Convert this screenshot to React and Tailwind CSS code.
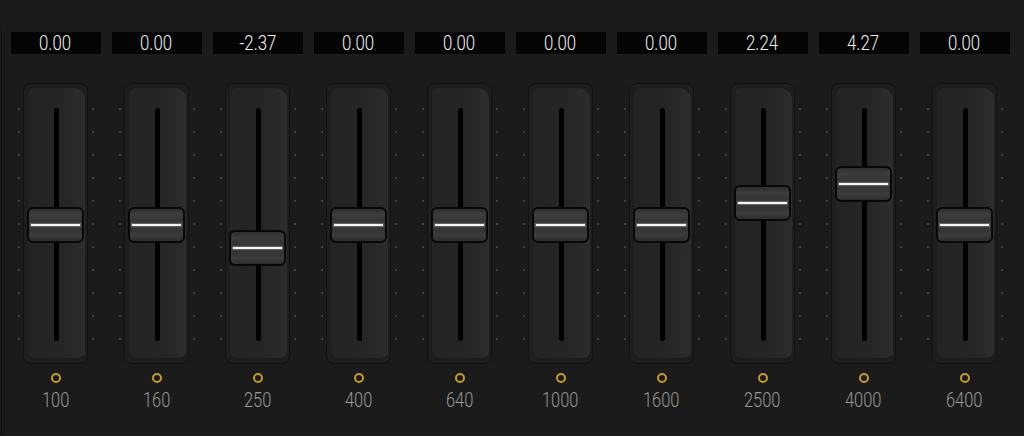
import React from "react";

const bands = [
  { f: "100", v: 0 },
  { f: "160", v: 0 },
  { f: "250", v: -2.37 },
  { f: "400", v: 0 },
  { f: "640", v: 0 },
  { f: "1000", v: 0 },
  { f: "1600", v: 0 },
  { f: "2500", v: 2.24 },
  { f: "4000", v: 4.27 },
  { f: "6400", v: 0 },
];

const DOTS = Array.from({ length: 11 });

function Dots() {
  return (
    <div className="mt-[25px] flex h-[232px] w-[2px] flex-col justify-between">
      {DOTS.map((_, i) => (
        <div key={i} className="h-[2px] w-[2px] bg-[#404040]" />
      ))}
    </div>
  );
}

function Band({ f, v }) {
  const top = 123 - v * 9.67;
  return (
    <div className="flex w-[101px] flex-col items-center">
      <div className="flex h-[22px] w-[90px] items-center justify-center bg-[#050505] text-[20px] font-light leading-none text-[#f0f0f0]">
        <span className="inline-block scale-x-[0.84]">{v.toFixed(2)}</span>
      </div>
      <div className="mt-[29px] flex items-start gap-[3px]">
        <Dots />
        <div className="relative h-[281px] w-[65px] rounded-[8px] border border-[#121212] bg-[#1e1e1e]">
          <div className="absolute bottom-[3px] left-[4px] right-[2px] top-[4px] rounded-[7px] rounded-tr-[12px] bg-[linear-gradient(to_right,#242424_0%,#252525_55%,#282828_75%,#2d2d2d_100%)] shadow-[inset_0_-2px_0_#1c1c1c]" />
          <div className="absolute left-[30px] top-[24px] h-[233px] w-[5px] rounded-full bg-[#000]" />
          <div
            className="absolute left-[3px] h-[36px] w-[57px] rounded-[6px] border-2 border-[#080808] bg-[linear-gradient(to_bottom,#2e2e2e_0%,#3d3d3d_18%,#343434_35%,#3a3a3a_50%,#343434_65%,#3c3c3c_82%,#2c2c2c_100%)]"
            style={{ top: `${top}px` }}
          >
            <div className="absolute left-[2px] right-[2px] top-[15px] h-[2px] bg-[#f4f4f4] shadow-[0_0_1px_1px_#666]" />
          </div>
        </div>
        <div className="ml-[1px]">
          <Dots />
        </div>
      </div>
      <div className="mt-[9px] h-[10px] w-[10px] rounded-full border-2 border-[#c49a2c]" />
      <div className="mt-[5px] text-[20px] font-light leading-[24px] text-[#999999]">
        <span className="inline-block scale-x-[0.82]">{f}</span>
      </div>
    </div>
  );
}

export default function App() {
  return (
    <div
      className="relative h-[436px] w-[1024px] overflow-hidden bg-[#1b1b1b]"
      style={{ fontFamily: "Roboto, 'Noto Sans', sans-serif" }}
    >
      <div className="absolute left-[1px] top-[28px] bottom-0 w-[1px] bg-[#0f0f0f]" />
      <div className="flex pl-[5px] pt-[32px]">
        {bands.map((b) => (
          <Band key={b.f} f={b.f} v={b.v} />
        ))}
      </div>
    </div>
  );
}
